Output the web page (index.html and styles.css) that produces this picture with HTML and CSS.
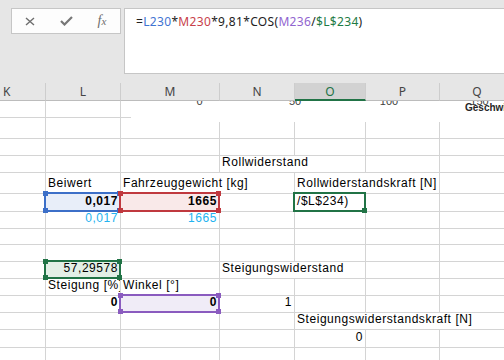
FILE: index.html
```html
<!DOCTYPE html>
<html lang="de">
<head>
<meta charset="utf-8">
<title>Excel</title>
<link rel="stylesheet" href="styles.css">
</head>
<body>
<div class="toolbar">
  <div class="fbtns">
    <span class="slot"><svg width="10" height="9" viewBox="0 0 10 9"><path d="M1 1 L9 8 M9 1 L1 8" class="stroke-x"/></svg></span>
    <span class="slot"><svg width="13" height="10" viewBox="0 0 13 10"><path d="M1 5 L4.5 8.5 L12 1" class="stroke-ok"/></svg></span>
    <span class="slot fx"><i>f</i><i class="fx-x">x</i></span>
  </div>
  <div class="formula">=<span class="ref1">L230</span>*<span class="ref2">M230</span>*9,81*COS(<span class="ref3">M236</span>/<span class="ref4">$L$234</span>)</div>
</div>
<div class="sheet">
  <div class="h hk">K</div><div class="h">L</div><div class="h">M</div><div class="h">N</div><div class="h hsel">O</div><div class="h">P</div><div class="h">Q</div>

  <div class="c"></div><div class="c"></div><div class="c"></div><div class="c"></div><div class="c"></div><div class="c"></div><div class="c"></div>
  <div class="c"></div><div class="c"></div><div class="c"></div><div class="c"></div><div class="c"></div><div class="c"></div><div class="c"></div>
  <div class="c"></div><div class="c"></div><div class="c"></div><div class="c"></div><div class="c"></div><div class="c"></div><div class="c"></div>

  <div class="c"></div><div class="c"></div><div class="c"></div><div class="c s2">Rollwiderstand</div><div class="c"></div><div class="c"></div>

  <div class="c"></div><div class="c">Beiwert</div><div class="c s2">Fahrzeuggewicht [kg]</div><div class="c s2">Rollwiderstandskraft [N]</div><div class="c"></div>

  <div class="c"></div>
  <div class="c r b fill-blue"><span class="bd bd-blue"><i class="sq tl"></i><i class="sq tr"></i><i class="sq bl"></i><i class="sq br"></i></span>0,017</div>
  <div class="c r b fill-red"><span class="bd bd-red"><i class="sq tl"></i><i class="sq tr"></i><i class="sq bl"></i><i class="sq br"></i></span>1665</div>
  <div class="c"></div>
  <div class="c"><span class="bd bd-green"><i class="sq br"></i></span>/$L$234)</div>
  <div class="c"></div><div class="c"></div>

  <div class="c"></div><div class="c r cyan">0,017</div><div class="c r cyan">1665</div><div class="c"></div><div class="c"></div><div class="c"></div><div class="c"></div>
  <div class="c"></div><div class="c"></div><div class="c"></div><div class="c"></div><div class="c"></div><div class="c"></div><div class="c"></div>
  <div class="c"></div><div class="c"></div><div class="c"></div><div class="c"></div><div class="c"></div><div class="c"></div><div class="c"></div>

  <div class="c"></div>
  <div class="c r fill-green"><span class="bd bd-green"><i class="sq tl"></i><i class="sq tr"></i><i class="sq bl"></i><i class="sq br"></i></span>57,29578</div>
  <div class="c"></div><div class="c s2">Steigungswiderstand</div><div class="c"></div><div class="c"></div>

  <div class="c"></div><div class="c clip">Steigung [%]</div><div class="c">Winkel [°]</div><div class="c"></div><div class="c"></div><div class="c"></div><div class="c"></div>

  <div class="c"></div><div class="c r b">0</div>
  <div class="c r b fill-purple"><span class="bd bd-purple"><i class="sq tl"></i><i class="sq tr"></i><i class="sq bl"></i><i class="sq br"></i></span>0</div>
  <div class="c r">1</div><div class="c"></div><div class="c"></div><div class="c"></div>

  <div class="c"></div><div class="c"></div><div class="c"></div><div class="c"></div><div class="c s3">Steigungswiderstandskraft [N]</div>

  <div class="c"></div><div class="c"></div><div class="c"></div><div class="c"></div><div class="c r">0</div><div class="c"></div><div class="c"></div>
  <div class="c"></div><div class="c"></div><div class="c"></div><div class="c"></div><div class="c"></div><div class="c"></div><div class="c"></div>

  <div class="chart">
    <span class="tick t0">0</span>
    <span class="tick t50">50</span>
    <span class="tick t100">100</span>
    <span class="tick t150">150</span>
    <span class="axis-title">Geschwindigkeit</span>
  </div>
</div>
</body>
</html>
```

FILE: styles.css
```css
* { box-sizing: border-box; margin: 0; padding: 0; }
html, body { width: 504px; height: 360px; overflow: hidden; background: #fff; }
body { font-family: "Liberation Sans", Arial, sans-serif; }

.toolbar {
  height: 83px;
  background: #e6e6e6;
  display: flex;
  align-items: flex-start;
  padding: 8px 0 0 11px;
  gap: 3px;
  width: 520px;
}
.fbtns {
  width: 110px;
  height: 26px;
  border: 1px solid #c6c6c6;
  background: #fdfdfd;
  display: flex;
  align-items: center;
}
.slot { width: 36px; display: flex; justify-content: center; align-items: center; }
.stroke-x { stroke: #6e6e6e; stroke-width: 1.4; fill: none; }
.stroke-ok { stroke: #777; stroke-width: 2.2; fill: none; }
.fx { font-family: "Liberation Serif", serif; font-size: 14px; color: #6e6e6e; line-height: 14px; }
.fx-x { font-size: 11px; }

.formula {
  flex: 0 0 400px;
  height: 66px;
  border: 1px solid #c6c6c6;
  background: #fff;
  font-family: "Noto Sans", "Open Sans", sans-serif;
  font-size: 12px;
  line-height: 16px;
  letter-spacing: 0.33px;
  padding: 5px 0 0 11px;
  color: #222;
  white-space: nowrap;
}
.ref1 { color: #3f74d2; }
.ref2 { color: #c8414a; }
.ref3 { color: #9165cf; }
.ref4 { color: #1e7b45; }

.sheet {
  position: relative;
  display: grid;
  grid-template-columns: 46px 75px 99px 75px 71px 74px 75px;
  grid-template-rows: 18px 17px 21px 17px 17px 21px 18px 17px 16px 17px 17px 17px 17px 17px 18px 17px;
  width: 515px;
}

.h {
  background: #e6e6e6;
  border-right: 1px solid #cdcdcd;
  border-bottom: 1px solid #bcbcbc;
  font-family: "Noto Sans", "Open Sans", sans-serif;
  font-size: 12px;
  line-height: 16px;
  padding-top: 1px;
  color: #444;
  text-align: center;
}
.hk { text-align: left; padding-left: 3px; }
.hsel { background: #d2d2d2; color: #217346; border-bottom: 2px solid #217346; }

.c {
  border-right: 1px solid #d4d4d4;
  border-bottom: 1px solid #d4d4d4;
  display: flex;
  align-items: flex-end;
  padding: 0 2px 3px;
  font-size: 12px;
  line-height: 14px;
  letter-spacing: 0.55px;
  white-space: nowrap;
  color: #000;
  position: relative;
}
.s2 { grid-column: span 2; }
.s3 { grid-column: span 3; }
.r { justify-content: flex-end; }
.b { font-weight: bold; }
.cyan { color: #22b3f0; }
.clip { overflow: hidden; }

.fill-blue { background: #e8eef9; }
.fill-red { background: #f9e9e9; }
.fill-green { background: #e3efe6; }
.fill-purple { background: #f0ecf7; }

.bd {
  position: absolute;
  top: -2px; left: -2px; right: -1px; bottom: -1px;
  border: 2px solid;
  z-index: 2;
}
.bd-blue { border-color: #3c6fc8; }
.bd-red { border-color: #c0393f; }
.bd-green { border-color: #217346; }
.bd-purple { border-color: #8a5bbf; }
.sq { position: absolute; width: 5px; height: 5px; }
.bd-blue .sq { background: #3c6fc8; }
.bd-red .sq { background: #c0393f; }
.bd-green .sq { background: #217346; }
.bd-purple .sq { background: #8a5bbf; }
.tl { left: -3px; top: -3px; }
.tr { right: -3px; top: -3px; }
.bl { left: -3px; bottom: -3px; }
.br { right: -3px; bottom: -3px; }

.chart {
  position: absolute;
  left: 131px;
  top: 18px;
  width: 384px;
  height: 21px;
  background: #fff;
  overflow: hidden;
  z-index: 3;
}
.tick {
  position: absolute;
  top: -5px;
  font-size: 11px;
  line-height: 11px;
  color: #404040;
  transform: translateX(-50%);
}
.t0 { left: 68.5px; }
.t50 { left: 164px; }
.t100 { left: 258px; }
.t150 { left: 348.5px; }
.axis-title {
  position: absolute;
  left: 334px;
  top: 2px;
  font-size: 10px;
  line-height: 10px;
  font-weight: bold;
  color: #262626;
  white-space: nowrap;
}
```
